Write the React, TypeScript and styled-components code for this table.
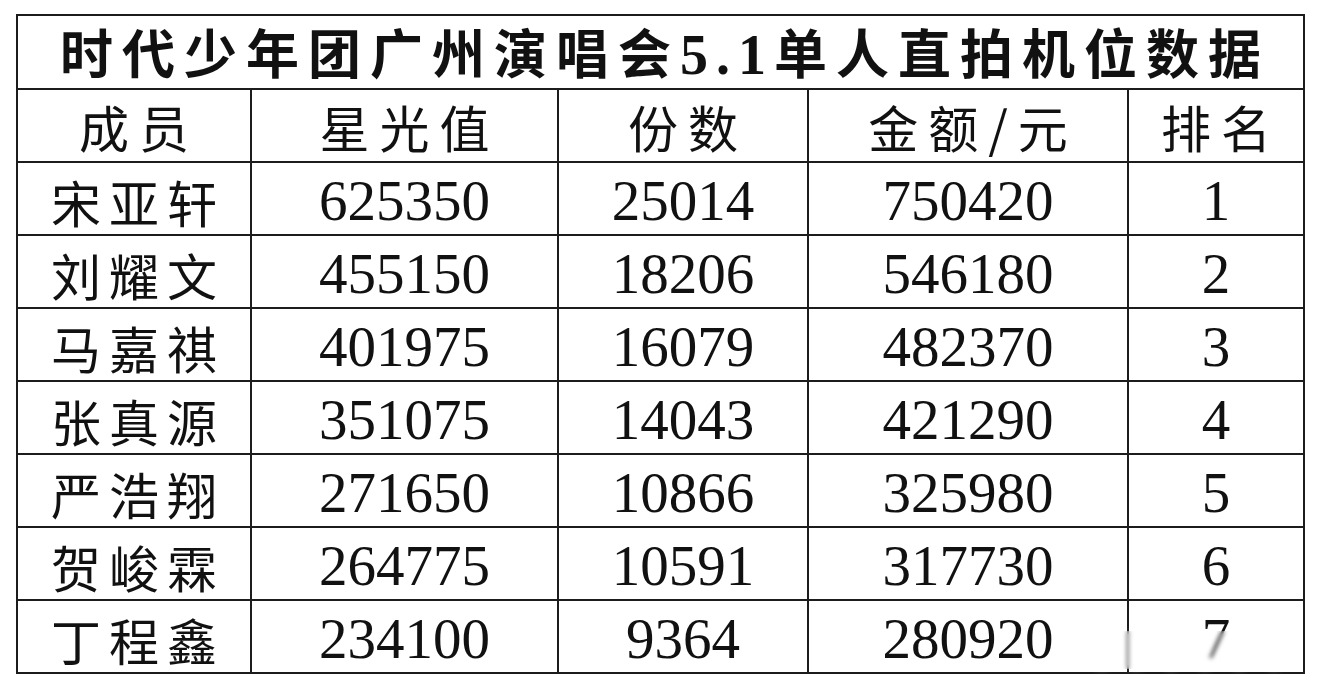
import styled, { createGlobalStyle } from 'styled-components';

const GlobalStyle = createGlobalStyle`
  html, body {
    margin: 0;
    padding: 0;
    background: #ffffff;
  }
  body {
    font-family: "Liberation Serif", "Noto Sans CJK SC", serif;
    color: #111111;
  }
`;

const columns = [234, 307, 250, 320, 176];
const headers = ['成员', '星光值', '份数', '金额/元', '排名'];

const rows = [
  ['宋亚轩', '625350', '25014', '750420', '1'],
  ['刘耀文', '455150', '18206', '546180', '2'],
  ['马嘉祺', '401975', '16079', '482370', '3'],
  ['张真源', '351075', '14043', '421290', '4'],
  ['严浩翔', '271650', '10866', '325980', '5'],
  ['贺峻霖', '264775', '10591', '317730', '6'],
  ['丁程鑫', '234100', '9364', '280920', '7'],
];

export default function App() {
  return (
    <>
      <GlobalStyle />
      <Page>
        <Sheet>
          <Table>
            <colgroup>
              {columns.map((w, i) => (
                <col key={i} style={{ width: w }} />
              ))}
            </colgroup>
            <thead>
              <tr>
                <TitleCell colSpan={5}>
                  时代少年团广州演唱会<Digits>5.1</Digits>单人直拍机位数据
                </TitleCell>
              </tr>
              <tr>
                {headers.map((h) => (
                  <HeadCell key={h}>{h}</HeadCell>
                ))}
              </tr>
            </thead>
            <tbody>
              {rows.map((r) => (
                <tr key={r[0]}>
                  <NameCell>{r[0]}</NameCell>
                  {r.slice(1).map((v, i) => (
                    <NumberCell key={i}>{v}</NumberCell>
                  ))}
                </tr>
              ))}
            </tbody>
          </Table>
          {/* blurred watermark patch over the last row */}
          <Watermark>
            {[0, 1, 2, 3, 4, 5].map((i) => (
              <Streak key={i} />
            ))}
          </Watermark>
        </Sheet>
      </Page>
    </>
  );
}

const Page = styled.div`
  width: 1320px;
  height: 682px;
  padding: 14px 0 0 16px;
  box-sizing: border-box;
`;

const Sheet = styled.div`
  position: relative;
  width: 1287px;
`;

const Table = styled.table`
  width: 1287px;
  table-layout: fixed;
  border-collapse: collapse;
  border: 2px solid #1c1c1c;

  td, th {
    border: 2px solid #1c1c1c;
    padding: 6px 0 0 0;
    text-align: center;
    vertical-align: middle;
    box-sizing: border-box;
    white-space: nowrap;
  }
`;

const TitleCell = styled.th`
  height: 74px;
  font-family: "Noto Sans CJK SC", sans-serif;
  font-weight: 700;
  font-size: 53px;
  letter-spacing: 9px;
  line-height: 1.05;
  padding-top: 4px !important;
  padding-left: 9px !important;
`;

const Digits = styled.span`
  font-family: "Liberation Serif", serif;
  font-weight: 700;
  font-size: 56px;
  letter-spacing: 8px;
`;

const HeadCell = styled.th`
  height: 73px;
  font-family: "Noto Sans CJK SC", sans-serif;
  font-weight: 400;
  font-size: 50px;
  letter-spacing: 10px;
  line-height: 1.15;
  padding-top: 2px !important;
  padding-left: 10px !important;
`;

const NameCell = styled.td`
  height: 73px;
  font-family: "Noto Sans CJK SC", sans-serif;
  font-size: 50px;
  letter-spacing: 8px;
  line-height: 1.15;
  padding-left: 8px !important;
`;

const NumberCell = styled.td`
  height: 73px;
  font-family: "Liberation Serif", serif;
  font-size: 57px;
  line-height: 1.1;
`;

const Watermark = styled.div`
  position: absolute;
  right: 4px;
  bottom: 5px;
  width: 222px;
  height: 38px;
  display: flex;
  align-items: stretch;
  justify-content: space-around;
  padding: 0 8px;
  box-sizing: border-box;
  background: rgba(255, 255, 255, 0.12);
  backdrop-filter: blur(2px);
  pointer-events: none;
`;

const Streak = styled.div`
  width: 12px;
  background: rgba(255, 255, 255, 0.45);
  filter: blur(3px);
`;
